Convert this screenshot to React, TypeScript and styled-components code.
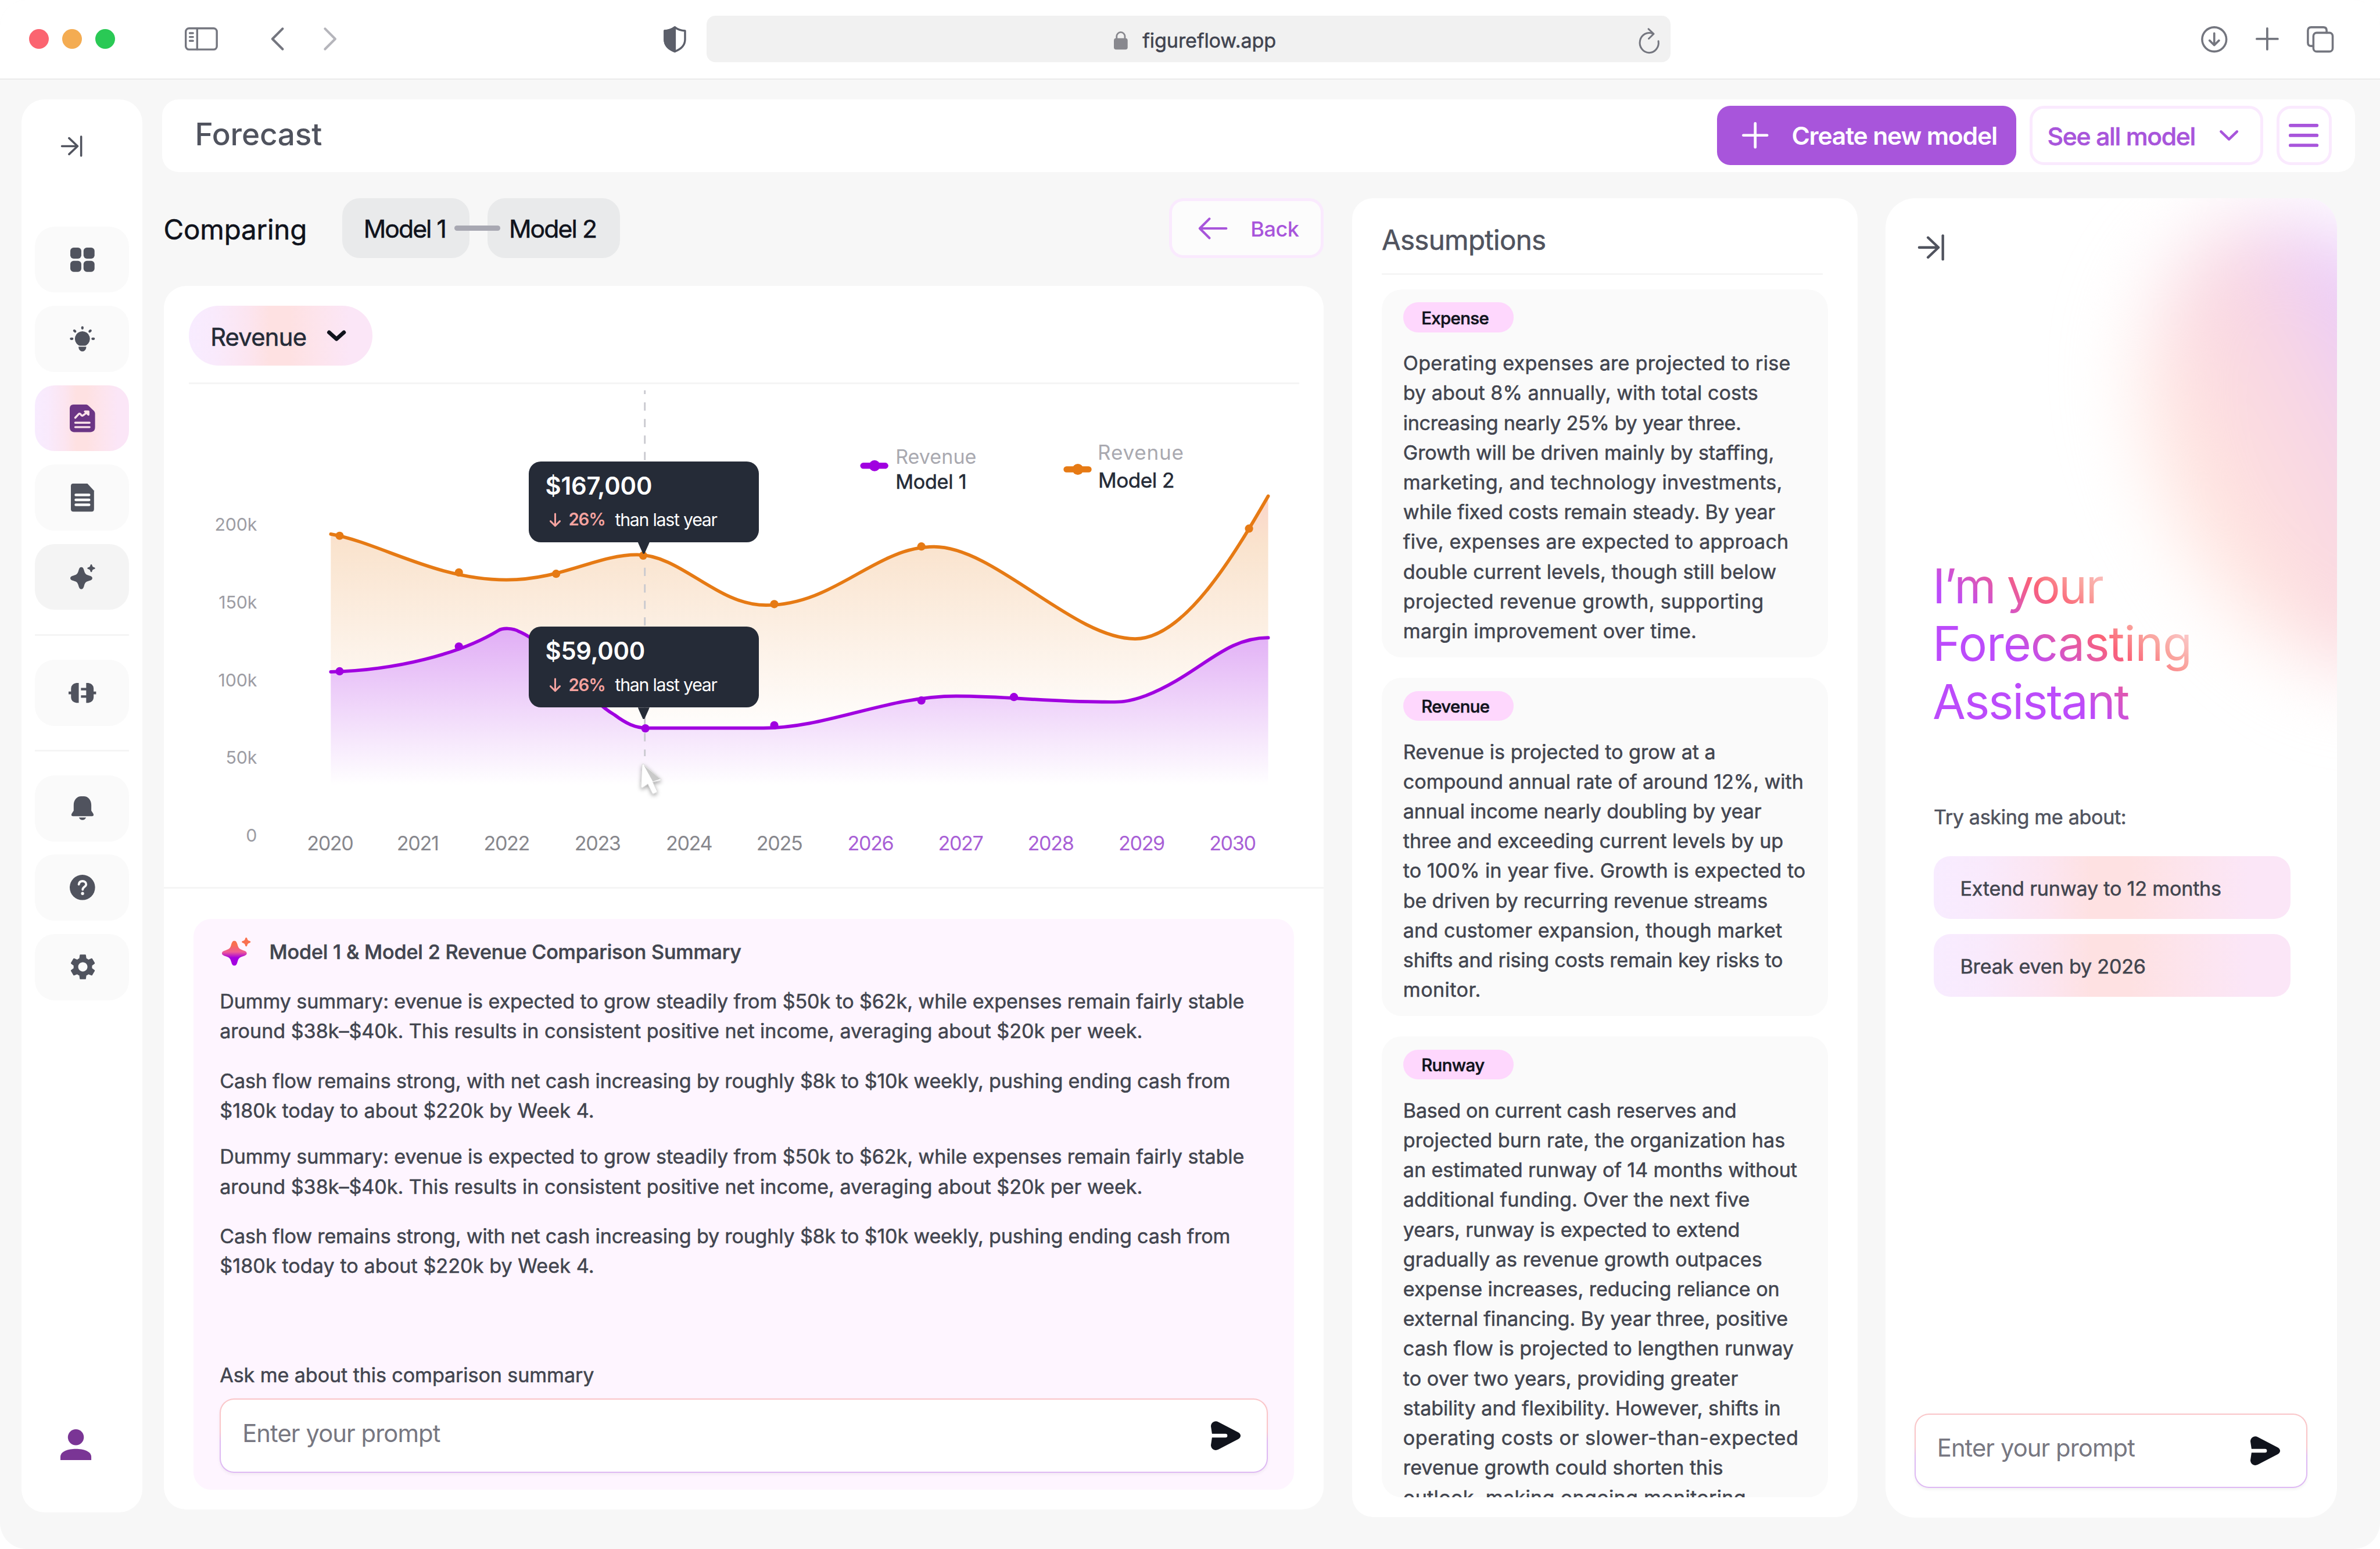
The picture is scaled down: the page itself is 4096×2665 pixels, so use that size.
import React from "react";
import styled, { createGlobalStyle, css } from "styled-components";
import { MdSettings } from "react-icons/md";

const K = 4096 / 4320;
const px = (n: number) => `${+(n * K).toFixed(2)}px`;

const ink = "#10131c";
const slate = "#50535e";
const body = "#42454f";
const violet = "#a855db";
const softGradient =
  "linear-gradient(90deg, #f8ecff 0%, #f9eafc 14%, #fce5f0 32%, #fee1e2 44%, #fee1e2 55%, #fde4ec 70%, #fbe6f7 88%)";

const type = (size: number, weight: number, track = 0) => css`
  font-size: ${px(size)};
  font-weight: ${weight};
  letter-spacing: ${track}em;
  white-space: nowrap;
`;

/* Thickens the regular face to a book weight between 400 and 500. */
const book = css`
  -webkit-text-stroke: 0.55px currentColor;
`;

const GlobalStyle = createGlobalStyle`
  * { box-sizing: border-box; }
  body { margin: 0; background: #fff; }
  body, button, input { font-family: Inter, "Liberation Sans", sans-serif; }
  h1, h2, h3, p { margin: 0; }
  button { border: 0; padding: 0; background: none; text-align: left; }
`;

/* ---------- window chrome ---------- */

const Window = styled.div`
  display: flex;
  flex-direction: column;
  width: 100vw;
  height: 100vh;
  overflow: hidden;
  border-radius: ${px(48)};
  background: #f7f7f7;
`;

const TitleBar = styled.header`
  display: flex;
  align-items: center;
  flex: none;
  height: ${px(144)};
  padding: 0 ${px(84)} 0 ${px(53)};
  background: #fff;
  border-bottom: ${px(3)} solid #ebebeb;
`;

const Lights = styled.div`
  display: flex;
  gap: ${px(24)};
  margin-right: ${px(126)};
`;

const Light = styled.span<{ $color: string }>`
  width: ${px(36)};
  height: ${px(36)};
  border-radius: 50%;
  background: ${(p) => p.$color};
`;

const NavArrows = styled.div`
  display: flex;
  gap: ${px(71)};
  margin: 0 ${px(594)} 0 ${px(97)};
`;

const AddressBar = styled.div`
  display: flex;
  align-items: center;
  width: ${px(1749)};
  height: ${px(84)};
  margin-left: ${px(37)};
  padding: ${px(4)} ${px(20)} 0 ${px(739)};
  border-radius: ${px(16)};
  background: #f1f1f1;
`;

const Address = styled.span`
  ${type(36, 400, -0.003)}
  ${book}
  flex: 1;
  margin-left: ${px(27)};
  color: #414450;
`;

const BarActions = styled.div`
  display: flex;
  align-items: center;
  gap: ${px(51)};
  margin-left: auto;
`;

/* ---------- page frame ---------- */

const Page = styled.div`
  display: flex;
  gap: ${px(36)};
  padding: ${px(36)} 0 0 ${px(39)};
`;

const Sidebar = styled.nav`
  display: flex;
  flex-direction: column;
  align-items: flex-start;
  width: ${px(219)};
  height: ${px(2564)};
  padding: ${px(66)} ${px(24)} ${px(94)};
  border-radius: ${px(42)};
  background: #fff;
`;

const CollapseButton = styled.button`
  display: flex;
  height: ${px(39)};
  margin: 0 0 ${px(126)} ${px(48)};
`;

const NavGroup = styled.div`
  display: flex;
  flex-direction: column;
  gap: ${px(24)};
`;

const NavItem = styled.button<{ $state?: "active" | "hover" }>`
  display: flex;
  align-items: center;
  justify-content: center;
  width: ${px(171)};
  height: ${px(120)};
  padding-left: ${px(3)};
  border-radius: ${px(36)};
  background: ${(p) =>
    p.$state === "active" ? softGradient : p.$state === "hover" ? "#f4f4f4" : "#fafafa"};
  color: ${(p) => (p.$state === "active" ? "#6b3585" : slate)};
`;

const NavRule = styled.hr`
  width: ${px(171)};
  height: ${px(3)};
  margin: ${px(43.5)} 0;
  border: 0;
  background: #f5f5f5;
`;

const Avatar = styled.div`
  display: flex;
  margin: auto 0 0 ${px(47)};
`;

const Main = styled.main`
  display: flex;
  flex-direction: column;
  gap: ${px(48)};
`;

const Header = styled.div`
  display: flex;
  align-items: center;
  width: ${px(3981)};
  height: ${px(132)};
  padding: 0 ${px(43)} 0 ${px(60)};
  border-radius: ${px(30)};
  background: #fff;
`;

const PageTitle = styled.h1`
  ${type(56, 500, -0.004)}
  flex: 1;
  padding-bottom: ${px(4)};
  color: ${slate};
`;

const CreateButton = styled.button`
  ${type(45, 600, -0.028)}
  display: flex;
  align-items: center;
  gap: ${px(42)};
  width: ${px(543)};
  height: ${px(108)};
  padding-left: ${px(45)};
  border-radius: ${px(24)};
  background: ${violet};
  color: #fff;
`;

const OutlineButton = styled.button<{ $width: number; $pad: string; $fill?: string }>`
  display: flex;
  align-items: center;
  justify-content: space-between;
  width: ${(p) => px(p.$width)};
  height: ${px(108)};
  padding: ${(p) => p.$pad};
  border: ${px(6)} solid #faeafe;
  border-radius: ${px(26)};
  background: ${(p) => p.$fill ?? "#fff"};
  color: ${violet};
`;

const SeeAllLabel = styled.span`
  ${type(45, 500, -0.032)}
  ${book}
  padding-top: ${px(3)};
`;

const BackLabel = styled.span`
  ${type(38, 500, -0.013)}
  padding-top: ${px(3)};
`;

const HeaderActions = styled.div`
  display: flex;
  gap: ${px(24)};
`;

const Columns = styled.div`
  display: flex;
  align-items: flex-start;
  gap: ${px(51)};
  padding-left: ${px(3)};
`;

/* ---------- comparison column ---------- */

const Comparison = styled.section`
  display: flex;
  flex-direction: column;
  gap: ${px(51)};
  width: ${px(2106)};
`;

const CompareRow = styled.div`
  display: flex;
  align-items: center;
  height: ${px(108)};
`;

const CompareLabel = styled.h2`
  ${type(50, 400, -0.003)}
  ${book}
  width: ${px(324)};
  padding: ${px(5)} 0 0 0;
  color: ${ink};
`;

const ChipPair = styled.div`
  position: relative;
  display: flex;
  gap: ${px(33)};
  margin-right: auto;
`;

const ModelChip = styled.div<{ $width: number }>`
  ${type(45, 400, -0.045)}
  ${book}
  display: flex;
  align-items: center;
  width: ${(p) => px(p.$width)};
  height: ${px(108)};
  padding: ${px(3)} 0 0 ${px(39)};
  border-radius: ${px(32)};
  background: #e9eaeb;
  color: ${ink};
`;

const ChipLink = styled.span`
  position: absolute;
  left: ${px(204)};
  top: ${px(49)};
  width: ${px(83)};
  height: ${px(10)};
  border-radius: ${px(5)};
  background: #a8a8b2;
`;

const Card = styled.div`
  display: flex;
  flex-direction: column;
  height: ${px(2220)};
  padding-top: ${px(36)};
  border-radius: ${px(40)};
  background: #fff;
`;

const MetricSelect = styled.button`
  ${type(44, 400, -0.018)}
  ${book}
  display: flex;
  align-items: center;
  justify-content: space-between;
  flex: none;
  width: ${px(333)};
  height: ${px(108)};
  margin-left: ${px(46)};
  padding: 0 ${px(48)} 0 ${px(39)};
  border-radius: ${px(54)};
  background: ${softGradient};
  color: #252b37;
`;

const MetricName = styled.span`
  padding-top: ${px(5)};
`;

const Rule = styled.hr<{ $margin: string }>`
  flex: none;
  align-self: stretch;
  height: ${px(3)};
  margin: ${(p) => p.$margin};
  border: 0;
  background: #f5f5f5;
`;

const ChartArea = styled.div`
  position: relative;
  height: ${px(913)};
`;

const ChartSvg = styled.svg`
  display: block;
  width: 100%;
  height: 100%;
`;

const ChartText = styled.text<{ $fill: string; $size: number; $track: number }>`
  font-size: ${(p) => p.$size}px;
  letter-spacing: ${(p) => p.$track}em;
  fill: ${(p) => p.$fill};
`;

const LegendName = styled(ChartText)`
  stroke: #252b37;
  stroke-width: 0.6px;
`;

const Tooltip = styled.div<{ $top: number }>`
  position: absolute;
  left: ${px(663)};
  top: ${(p) => px(p.$top)};
  display: flex;
  flex-direction: column;
  gap: ${px(14)};
  width: ${px(417)};
  height: ${px(147)};
  padding: ${px(18)} ${px(30)} 0;
  border-radius: ${px(22)};
  background: #252b37;
  color: #fff;

  &::after {
    content: "";
    position: absolute;
    left: ${px(198)};
    top: 100%;
    width: ${px(21)};
    height: ${px(21)};
    background: #252b37;
    clip-path: polygon(0 0, 100% 0, 90% 25%, 56% 100%, 44% 100%, 10% 25%);
  }
`;

const TooltipValue = styled.strong<{ $track: number }>`
  font-size: ${px(44)};
  font-weight: 600;
  letter-spacing: ${(p) => p.$track}em;
  line-height: ${px(54)};
`;

const TooltipNote = styled.div`
  display: flex;
  align-items: center;
  height: ${px(40)};
  padding-left: ${px(8)};
`;

const TooltipDelta = styled.span`
  ${type(31, 600, -0.04)}
  margin: 0 ${px(18)} 0 ${px(14)};
  color: #f5a3a0;
`;

const TooltipText = styled.span`
  ${type(32, 400, -0.042)}
`;

/* ---------- summary ---------- */

const Summary = styled.div`
  display: flex;
  flex-direction: column;
  height: ${px(1035)};
  margin: ${px(55)} ${px(54)} 0;
  padding: ${px(32)} ${px(48)} ${px(30)};
  border-radius: ${px(32)};
  background: #fef5ff;
`;

const SummaryHead = styled.div`
  display: flex;
  align-items: center;
  gap: ${px(33)};
  height: ${px(54)};
  padding-left: ${px(4)};
`;

const SummaryTitle = styled.h3`
  ${type(36, 500, -0.005)}
  ${book}
  color: ${body};
`;

const Paragraph = styled.p<{ $gap: number }>`
  display: flex;
  flex-direction: column;
  margin-top: ${(p) => px(p.$gap)};
`;

const Line = styled.span<{ $track: number }>`
  ${book}
  font-size: ${px(36)};
  font-weight: 400;
  line-height: ${px(54)};
  letter-spacing: ${(p) => p.$track / 1000}em;
  white-space: pre;
  color: ${body};
`;

const AskLabel = styled.label`
  ${type(36, 400, -0.003)}
  ${book}
  margin-top: auto;
  line-height: ${px(54)};
  color: ${body};
`;

const PromptBox = styled.div<{ $margin: string }>`
  display: flex;
  align-items: center;
  justify-content: space-between;
  flex: none;
  height: ${px(135)};
  margin: ${(p) => p.$margin};
  padding: 0 ${px(46)} 0 ${px(39)};
  border: ${px(3)} solid transparent;
  border-radius: ${px(26)};
  background:
    linear-gradient(#fff, #fff) padding-box,
    linear-gradient(#fac5c8 44%, #deb9f3 58%) border-box;
  box-shadow: 0 ${px(3)} ${px(6)} rgba(16, 19, 28, 0.05);
`;

const Placeholder = styled.span`
  ${type(44, 400, -0.022)}
  padding-bottom: ${px(10)};
  color: #777781;
`;

/* ---------- assumptions ---------- */

const Assumptions = styled.section`
  display: flex;
  flex-direction: column;
  width: ${px(918)};
  height: ${px(2393)};
  padding: 0 ${px(54)} ${px(36)};
  border-radius: ${px(38)};
  background: #fff;
`;

const AssumptionsTitle = styled.h2`
  ${type(50, 400, -0.014)}
  ${book}
  height: ${px(135.5)};
  padding-top: ${px(14)};
  line-height: ${px(122)};
  color: ${slate};
`;

const AssumptionList = styled.div`
  display: flex;
  flex-direction: column;
  gap: ${px(37)};
  height: ${px(2192)};
  overflow: hidden;
  border-radius: ${px(36)};
`;

const AssumptionCard = styled.article`
  flex: none;
  padding: ${px(24)} ${px(39)} ${px(21)};
  border-radius: ${px(36)};
  background: #fafafa;
`;

const Tag = styled.span`
  ${type(31, 500, -0.02)}
  ${book}
  display: flex;
  align-items: center;
  width: ${px(201)};
  height: ${px(54)};
  padding: ${px(2)} 0 0 ${px(33)};
  border-radius: ${px(27)};
  background: #fed7fd;
  color: ${ink};
`;

/* ---------- assistant ---------- */

const Assistant = styled.aside`
  position: relative;
  display: flex;
  flex-direction: column;
  width: ${px(819)};
  height: ${px(2394)};
  padding: ${px(65)} ${px(54)} ${px(54)} ${px(52)};
  overflow: hidden;
  border-radius: ${px(54)};
  background: #fff;
`;

const Glow = styled.div`
  position: absolute;
  left: ${px(500)};
  top: ${px(14)};
  width: ${px(600)};
  height: ${px(870)};
  border-radius: 50%;
  background: linear-gradient(88deg, #ffe3dd 13%, #fee0e0 25%, #f9d8e2 38%, #f8d6e3 56%, #eacbfa 72%);
  filter: blur(${px(72)});
  transform: rotate(-25deg);
`;

const PanelButton = styled.button`
  position: relative;
  display: flex;
  height: ${px(48)};
  margin-left: ${px(7)};
`;

const AssistantTitle = styled.h2`
  position: relative;
  width: ${px(640)};
  margin: ${px(538)} 0 ${px(130)} ${px(33)};
  font-size: ${px(87)};
  font-weight: 400;
  line-height: ${px(105)};
  background: linear-gradient(39deg, #bc4bfb 32%, #fb6277 50%, #faa19b 58%, #fbc8c8 66%);
  background-clip: text;
  -webkit-background-clip: text;
  color: transparent;
`;

const TitleLine = styled.span<{ $track: number }>`
  display: block;
  letter-spacing: ${(p) => p.$track}em;
`;

const Hint = styled.p`
  ${type(36, 400, -0.01)}
  ${book}
  margin: 0 0 ${px(44)} ${px(35)};
  line-height: ${px(54)};
  color: ${slate};
`;

const Suggestions = styled.div`
  display: flex;
  flex-direction: column;
  gap: ${px(27)};
  margin-left: ${px(35)};
`;

const Suggestion = styled.button`
  ${type(36, 400, -0.006)}
  ${book}
  width: ${px(648)};
  height: ${px(114)};
  padding: ${px(3)} 0 0 ${px(48)};
  border-radius: ${px(30)};
  background: ${softGradient};
  color: ${body};
`;

/* ---------- icons ---------- */

type IconProps = { w: number; h: number; children: React.ReactNode; stroke?: string; width?: number };

const IconSvg = styled.svg`
  display: block;
  flex: none;
  overflow: visible;
`;

function Icon({ w, h, children, stroke, width = 4 }: IconProps) {
  return (
    <IconSvg
      width={w * K}
      height={h * K}
      viewBox={`0 0 ${w} ${h}`}
      fill={stroke ? "none" : "currentColor"}
      stroke={stroke}
      strokeWidth={width}
      strokeLinecap="round"
      strokeLinejoin="round"
    >
      {children}
    </IconSvg>
  );
}

const STAR =
  "M20 0C22.6 0 23.8 1.8 25 6C26.7 12 28 13.4 34 15.2C38.2 16.4 40 17.6 40 20C40 22.4 38.2 23.6 34 24.8C28 26.6 26.7 28 25 34C23.8 38.2 22.6 40 20 40C17.4 40 16.2 38.2 15 34C13.3 28 12 26.6 6 24.8C1.8 23.6 0 22.4 0 20C0 17.6 1.8 16.4 6 15.2C12 13.4 13.3 12 15 6C16.2 1.8 17.4 0 20 0Z";

const CollapseIcon = ({ size }: { size: number }) => (
  <IconSvg
    width={size * K}
    height={size * K}
    viewBox="0 0 48 48"
    fill="none"
    stroke={slate}
    strokeWidth="4.6"
    strokeLinecap="round"
    strokeLinejoin="round"
  >
    <path d="M2 24H37M18 6L37 24L18 42" />
    <path d="M45 2.5V45.5" />
  </IconSvg>
);

const SendIcon = () => (
  <Icon w={55} h={53}>
    <path
      fill={ink}
      d="M0 9.5C0 2.5 7 -2 13.5 1.5L49 20C55.5 23.4 55.5 29.6 49 33L13.5 51.5C7 55 0 50.5 0 43.5L2 29.8H26.5A3.4 3.4 0 0 0 26.5 23H2Z"
    />
  </Icon>
);

const DashboardIcon = () => (
  <Icon w={44} h={44}>
    <rect width="20" height="20" rx="6" />
    <rect x="24" width="20" height="20" rx="6" />
    <rect y="24" width="20" height="20" rx="6" />
    <rect x="24" y="24" width="20" height="20" rx="6" />
  </Icon>
);

const BulbIcon = () => (
  <Icon w={46} h={46}>
    <path d="M23 9.5A13.6 13.6 0 0 1 30.5 34.5Q29 35.5 27.5 35.5H18.5Q17 35.5 15.5 34.5A13.6 13.6 0 0 1 23 9.5Z" />
    <path d="M16 37.5H30C30 42.5 27 46 23 46S16 42.5 16 37.5Z" />
    <g stroke="currentColor" strokeWidth="4.4" fill="none">
      <path d="M23 2.5V4M8.3 8.3L9.8 9.6M37.7 8.3L36.2 9.6M2.5 23H4.5M43.5 23H41.5" />
    </g>
  </Icon>
);

const ForecastIcon = () => (
  <Icon w={46} h={50}>
    <path d="M7 0H29C31 0 32.5 .6 34 2L43.5 11C45.2 12.7 46 14.5 46 17V41C46 47 43 50 37 50H8C3 50 0 47 0 41V8C0 3 2 0 7 0Z" />
    <g stroke="#fde3ea" strokeWidth="3.6" fill="none">
      <path d="M10 24L16 17.5C17.5 16 18.8 16.2 20 18C21.5 20.8 23 20.8 25 19L31 14.5" />
      <path d="M27.5 12.5H34V18.5Z" fill="#fde3ea" />
      <path d="M10 33H36M10 41H36" />
    </g>
  </Icon>
);

const DocumentIcon = () => (
  <Icon w={42} h={51}>
    <path d="M4 0H30L42 13V46.5Q42 51 37.5 51H4.5Q0 51 0 46.5V4.5Q0 0 4 0Z" />
    <path d="M9 20.5H33M9 29.5H33M9 38.5H33" stroke="#fafafa" strokeWidth="4.8" />
  </Icon>
);

const SparkleIcon = () => (
  <Icon w={45} h={45}>
    <path d={STAR} transform="translate(0 5)" />
    <path d={STAR} transform="translate(31 0) scale(.35)" />
  </Icon>
);

const PlugIcon = () => (
  <Icon w={50} h={36}>
    <path d="M14 0H18.5V36H14Q4.5 34 4.5 26V20.5H0V15.5H4.5V10Q4.5 2 14 0Z" />
    <path d="M32 0H36Q45.5 2 45.5 10V15.5H50V20.5H45.5V26Q45.5 34 36 36H32V27H22.5V22.5H32V13.5H22.5V9H32Z" />
  </Icon>
);

const BellIcon = () => (
  <Icon w={40} h={43}>
    <path d="M4 26V16C4 6.5 10 0 17.5 0H22.5C30 0 36 6.5 36 16V26L39.5 31.5Q41.5 36 37.5 36H2.5Q-1.5 36 .5 31.5Z" />
    <path d="M13.5 38.5H26.5Q24.5 43 20 43T13.5 38.5Z" />
  </Icon>
);

const HelpIcon = () => (
  <Icon w={46} h={46}>
    <circle cx="23" cy="23" r="23" />
    <path
      d="M16.5 17.5C17 13.5 19.8 11.6 23.2 11.6C27 11.6 29.8 13.8 29.8 17.3C29.8 22 23.5 22 23.5 27"
      fill="none"
      stroke="#fafafa"
      strokeWidth="4"
    />
    <circle cx="23.3" cy="34" r="2.8" fill="#fafafa" />
  </Icon>
);

const SummarySparkle = () => (
  <Icon w={53} h={51}>
    <defs>
      <linearGradient id="spark" x1="0" y1="0" x2="0" y2="1">
        <stop offset=".15" stopColor="#f9704f" />
        <stop offset=".45" stopColor="#ee5c96" />
        <stop offset=".68" stopColor="#a400e0" />
      </linearGradient>
    </defs>
    <path d={STAR} transform="translate(0 6) scale(1.125)" fill="url(#spark)" />
    <path d={STAR} transform="translate(36 0) scale(.4)" fill="#f9704f" />
  </Icon>
);

/* ---------- data ---------- */

type TextLine = [text: string, track: number];

const yLabels: [string, number][] = [
  ["200k", 963],
  ["150k", 1104],
  ["100k", 1245],
  ["50k", 1386],
  ["0", 1527],
];

const xLabels: [string, number][] = [
  ["2020", 598.5],
  ["2021", 757.5],
  ["2022", 919],
  ["2023", 1084],
  ["2024", 1250],
  ["2025", 1414],
  ["2026", 1579.5],
  ["2027", 1743],
  ["2028", 1906.5],
  ["2029", 2071.5],
  ["2030", 2236.5],
];

const model2Curve =
  "M600 969C690 985 790 1052 919 1052C1019 1052 1083 1006.5 1156 1006.5C1236 1006.5 1300 1098 1390 1098C1516 1098 1588 992 1695 992C1805 992 1948 1159 2060 1159C2150 1159 2241 1005 2301.5 900";
const model1Curve =
  "M600 1219C720 1216 835 1186 904 1144C912 1139 930 1139 942 1146C1000 1170 1060 1265 1115 1297C1135 1312 1152 1321 1175 1321L1385 1321C1500 1321 1610 1263 1735 1263C1830 1263 1890 1273 2000 1273.5C2030 1274 2045 1275 2080 1262C2180 1222 2220 1157 2301.5 1157";

const model2Points = [[616, 972], [832.5, 1038.6], [1009, 1041], [1167, 1008], [1405, 1096], [1672, 991.5], [2266.7, 959]];
const model1Points = [[616, 1218], [832.5, 1173], [1171, 1321.5], [1405, 1316], [1672, 1271], [1840, 1264.6]];

const dummy: TextLine[] = [
  ["Dummy summary: evenue is expected to grow steadily from $50k to $62k, while expenses remain fairly stable", -3.7],
  ["around $38k–$40k. This results in consistent positive net income, averaging about $20k per week.", -1],
];
const cash: TextLine[] = [
  ["Cash flow remains strong, with net cash increasing by roughly $8k to $10k weekly, pushing ending cash from", -6],
  ["$180k today to about $220k by Week 4.", 2],
];

const assumptions: { tag: string; lines: TextLine[] }[] = [
  {
    tag: "Expense",
    lines: [
      ["Operating expenses are projected to rise", 7],
      ["by about 8% annually, with total costs", 0],
      ["increasing nearly 25% by year three.", -10],
      ["Growth will be driven mainly by staffing,", -5],
      ["marketing, and technology investments,", 7],
      ["while fixed costs remain steady. By year", -5],
      ["five, expenses are expected to approach", 5],
      ["double current levels, though still below", 1],
      ["projected revenue growth, supporting", 10],
      ["margin improvement over time.", 5],
    ],
  },
  {
    tag: "Revenue",
    lines: [
      ["Revenue is projected to grow at a", 0],
      ["compound annual rate of around 12%, with", -2],
      ["annual income nearly doubling by year", -6],
      ["three and exceeding current levels by up", -2],
      ["to 100% in year five. Growth is expected to", 1],
      ["be driven by recurring revenue streams", -7],
      ["and customer expansion, though market", 2],
      ["shifts and rising costs remain key risks to", -7],
      ["monitor.", 12],
    ],
  },
  {
    tag: "Runway",
    lines: [
      ["Based on current cash reserves and", -8],
      ["projected burn rate, the organization has", 1],
      ["an estimated runway of 14 months without", -3],
      ["additional funding. Over the next five", 1],
      ["years, runway is expected to extend", -3],
      ["gradually as revenue growth outpaces", 1],
      ["expense increases, reducing reliance on", -2],
      ["external financing. By year three, positive", -4],
      ["cash flow is projected to lengthen runway", -1],
      ["to over two years, providing greater", 1],
      ["stability and flexibility. However, shifts in", -1],
      ["operating costs or slower-than-expected", 16],
      ["revenue growth could shorten this", 0],
      ["outlook, making ongoing monitoring", 9],
    ],
  },
];

/* ---------- parts ---------- */

const Lines = ({ lines, gap }: { lines: TextLine[]; gap: number }) => (
  <Paragraph $gap={gap}>
    {lines.map(([text, track]) => (
      <Line key={text} $track={track}>
        {text}
      </Line>
    ))}
  </Paragraph>
);

function Chart() {
  return (
    <ChartSvg viewBox="297 697 2106 913">
      <defs>
        <linearGradient id="fill2" gradientUnits="userSpaceOnUse" x1="0" y1="900" x2="0" y2="1340">
          <stop offset="0" stopColor="#f0603a" stopOpacity=".27" />
          <stop offset=".2" stopColor="#e67a14" stopOpacity=".21" />
          <stop offset="1" stopColor="#e67a14" stopOpacity="0" />
        </linearGradient>
        <linearGradient id="fill1" gradientUnits="userSpaceOnUse" x1="0" y1="1140" x2="0" y2="1425">
          <stop offset="0" stopColor="#a000e0" stopOpacity=".32" />
          <stop offset="1" stopColor="#a000e0" stopOpacity="0" />
        </linearGradient>
        <filter id="cursorShadow" x="-50%" y="-50%" width="200%" height="200%">
          <feDropShadow dx="0" dy="3" stdDeviation="4" floodOpacity=".35" />
        </filter>
      </defs>

      <path d={`${model2Curve}V1425H600Z`} fill="url(#fill2)" />
      <path d={`${model1Curve}V1425H600Z`} fill="#fff" />
      <path d={`${model1Curve}V1425H600Z`} fill="url(#fill1)" />
      <path d="M1170 708V1372" stroke="#c9c9cf" strokeWidth="3" strokeDasharray="15 15" strokeDashoffset="8" />
      <g fill="none" strokeWidth="6" strokeLinecap="round">
        <path d={model2Curve} stroke="#e67a14" />
        <path d={model1Curve} stroke="#a000e0" />
      </g>
      <g fill="#e67a14">
        {model2Points.map(([x, y]) => (
          <circle key={x} cx={x} cy={y} r="7.5" />
        ))}
      </g>
      <g fill="#a000e0">
        {model1Points.map(([x, y]) => (
          <circle key={x} cx={x} cy={y} r="7.5" />
        ))}
      </g>

      {yLabels.map(([label, y]) => (
        <ChartText key={label} x={466} y={y} textAnchor="end" $fill="#9c9ca3" $size={32} $track={-0.005}>
          {label}
        </ChartText>
      ))}
      {xLabels.map(([label, x], i) => (
        <ChartText
          key={label}
          x={x}
          y={1543}
          textAnchor="middle"
          $fill={i < 6 ? "#87878d" : "#a85fd6"}
          $size={36}
          $track={-0.04}
        >
          {label}
        </ChartText>
      ))}

      <g fill="#a000e0">
        <rect x="1561" y="839.5" width="51" height="11" rx="5.5" />
        <circle cx="1587" cy="845" r="10" />
      </g>
      <ChartText x={1625} y={842} $fill="#a9a9b0" $size={36} $track={0}>
        Revenue
      </ChartText>
      <LegendName x={1625} y={887} $fill="#252b37" $size={36} $track={-0.007}>
        Model 1
      </LegendName>
      <g fill="#e67a14">
        <rect x="1930" y="846" width="51" height="11" rx="5.5" />
        <circle cx="1956" cy="851.5" r="10" />
      </g>
      <ChartText x={1992} y={834} $fill="#a9a9b0" $size={37} $track={0.022}>
        Revenue
      </ChartText>
      <LegendName x={1993} y={885} $fill="#252b37" $size={37} $track={-0.014}>
        Model 2
      </LegendName>

      <g filter="url(#cursorShadow)">
        <path
          d="M1165 1388C1165 1386 1167 1385.5 1168.5 1387L1198 1412.5C1200 1414.5 1199.5 1416 1197 1416.5L1184.5 1419L1192 1434.5C1192.8 1436.2 1192.5 1437 1191 1438L1186.5 1440C1185 1440.5 1184 1440.2 1183 1438.5L1175.5 1422.5L1167 1428.5C1164.5 1430 1163 1429.2 1163 1426.5Z"
          fill="#fff"
          stroke="#cfcfcf"
          strokeWidth="1"
        />
        <path d="M1168 1388L1198 1413.5L1184.5 1418Z" fill="#c9c9c9" />
      </g>
    </ChartSvg>
  );
}

const ChartTooltip = ({ top, value, track }: { top: number; value: string; track: number }) => (
  <Tooltip $top={top}>
    <TooltipValue $track={track}>{value}</TooltipValue>
    <TooltipNote>
      <Icon w={20} h={26} stroke="#f5a3a0" width={3.2}>
        <path d="M10 2V24M1.5 15.5L10 24L18.5 15.5" />
      </Icon>
      <TooltipDelta>26%</TooltipDelta>
      <TooltipText>than last year</TooltipText>
    </TooltipNote>
  </Tooltip>
);

const Prompt = ({ margin }: { margin: string }) => (
  <PromptBox $margin={margin}>
    <Placeholder>Enter your prompt</Placeholder>
    <SendIcon />
  </PromptBox>
);

const chrome = "#74767f";

export default function App() {
  return (
    <>
      <GlobalStyle />
      <Window>
        <TitleBar>
          <Lights>
            <Light $color="#fb6470" />
            <Light $color="#f4ac52" />
            <Light $color="#2ac955" />
          </Lights>
          <Icon w={60} h={42} stroke={chrome} width={3.6}>
            <rect x="1.8" y="1.8" width="56.4" height="38.4" rx="6" />
            <path d="M22.5 2V40M9 10.5H15M9 17.5H15M9 24.5H15" />
          </Icon>
          <NavArrows>
            <Icon w={24} h={42} stroke={chrome} width={4.4}>
              <path d="M21.5 2.5L3 21L21.5 39.5" />
            </Icon>
            <Icon w={24} h={42} stroke="#b5b5bb" width={4.4}>
              <path d="M2.5 2.5L21 21L2.5 39.5" />
            </Icon>
          </NavArrows>
          <Icon w={41} h={48} stroke="#5c5f6a" width={3.6}>
            <path d="M20.5 2C15.5 6 9 8 2 8.5V24C2 35 10 42 20.5 46C31 42 39 35 39 24V8.5C32 8 25.5 6 20.5 2Z" />
            <path d="M20.5 2C15.5 6 9 8 2 8.5V24C2 35 10 42 20.5 46Z" fill="#5c5f6a" />
          </Icon>
          <AddressBar>
            <Icon w={25} h={33}>
              <rect y="12.5" width="25" height="20.5" rx="4" fill="#88888e" />
              <path d="M5 14V9.5A7.5 8 0 0 1 20 9.5V14" fill="none" stroke="#88888e" strokeWidth="3" />
            </Icon>
            <Address>figureflow.app</Address>
            <Icon w={38} h={45} stroke={chrome} width={3.2}>
              <path d="M36 24A17 18 0 1 1 26 10.5M18 2L27.5 10.8L18.5 19.5" />
            </Icon>
          </AddressBar>
          <BarActions>
            <Icon w={48} h={48} stroke={chrome} width={3.8}>
              <circle cx="24" cy="24" r="22" />
              <path d="M24 13V34M15.5 26L24 34.5L32.5 26" />
            </Icon>
            <Icon w={42} h={42} stroke={chrome} width={4}>
              <path d="M21 2V40M2 21H40" />
            </Icon>
            <Icon w={49} h={48} stroke={chrome} width={3.8}>
              <path d="M12 36H8Q2 36 2 30V8Q2 2 8 2H30Q36 2 36 8V12" />
              <rect x="12" y="12" width="35" height="34" rx="6" />
            </Icon>
          </BarActions>
        </TitleBar>

        <Page>
          <Sidebar>
            <CollapseButton>
              <CollapseIcon size={39} />
            </CollapseButton>
            <NavGroup>
              <NavItem>
                <DashboardIcon />
              </NavItem>
              <NavItem>
                <BulbIcon />
              </NavItem>
              <NavItem $state="active">
                <ForecastIcon />
              </NavItem>
              <NavItem>
                <DocumentIcon />
              </NavItem>
              <NavItem $state="hover">
                <SparkleIcon />
              </NavItem>
            </NavGroup>
            <NavRule />
            <NavItem>
              <PlugIcon />
            </NavItem>
            <NavRule />
            <NavGroup>
              <NavItem>
                <BellIcon />
              </NavItem>
              <NavItem>
                <HelpIcon />
              </NavItem>
              <NavItem>
                <MdSettings size={56 * K} />
              </NavItem>
            </NavGroup>
            <Avatar>
              <Icon w={56} h={56}>
                <g fill="#7a3595">
                  <circle cx="28" cy="14.5" r="14.5" />
                  <path d="M0 56V50C0 40 14 35.5 28 35.5S56 40 56 50V56Z" />
                </g>
              </Icon>
            </Avatar>
          </Sidebar>

          <Main>
            <Header>
              <PageTitle>Forecast</PageTitle>
              <HeaderActions>
                <CreateButton>
                  <Icon w={48} h={48} stroke="#fff" width={5}>
                    <path d="M24 2.5V45.5M2.5 24H45.5" />
                  </Icon>
                  Create new model
                </CreateButton>
                <OutlineButton $width={424} $pad={`0 ${px(40)} 0 ${px(27)}`}>
                  <SeeAllLabel>See all model</SeeAllLabel>
                  <Icon w={34} h={19} stroke={violet} width={4.8}>
                    <path d="M2.5 2.5L17 16.5L31.5 2.5" />
                  </Icon>
                </OutlineButton>
                <OutlineButton $width={100} $pad={`0 ${px(17)}`}>
                  <Icon w={54} h={42} stroke={violet} width={6}>
                    <path d="M3 3H51M3 21H51M3 39H51" />
                  </Icon>
                </OutlineButton>
              </HeaderActions>
            </Header>

            <Columns>
              <Comparison>
                <CompareRow>
                  <CompareLabel>Comparing</CompareLabel>
                  <ChipPair>
                    <ModelChip $width={231}>Model 1</ModelChip>
                    <ModelChip $width={240}>Model 2</ModelChip>
                    <ChipLink />
                  </ChipPair>
                  <OutlineButton $width={281} $pad={`0 ${px(40)} 0 ${px(48)}`} $fill="#fcfcfc">
                    <Icon w={54} h={40} stroke={violet} width={4.4}>
                      <path d="M3 20H51M20.5 2.5L3 20L20.5 37.5" />
                    </Icon>
                    <BackLabel>Back</BackLabel>
                  </OutlineButton>
                </CompareRow>

                <Card>
                  <MetricSelect>
                    <MetricName>Revenue</MetricName>
                    <Icon w={34} h={18} stroke={ink} width={7}>
                      <path d="M3.5 3L17 15L30.5 3" />
                    </Icon>
                  </MetricSelect>
                  <Rule $margin={`${px(31)} ${px(45)} 0 ${px(46)}`} />
                  <ChartArea>
                    <Chart />
                    <ChartTooltip top={140} value="$167,000" track={-0.004} />
                    <ChartTooltip top={440} value="$59,000" track={-0.008} />
                  </ChartArea>
                  <Rule $margin="0" />
                  <Summary>
                    <SummaryHead>
                      <SummarySparkle />
                      <SummaryTitle>Model 1 &amp; Model 2 Revenue Comparison Summary</SummaryTitle>
                    </SummaryHead>
                    <Lines lines={dummy} gap={36} />
                    <Lines lines={cash} gap={36} />
                    <Lines lines={dummy} gap={30} />
                    <Lines lines={cash} gap={36} />
                    <AskLabel>Ask me about this comparison summary</AskLabel>
                    <Prompt margin={`${px(16)} 0 0`} />
                  </Summary>
                </Card>
              </Comparison>

              <Assumptions>
                <AssumptionsTitle>Assumptions</AssumptionsTitle>
                <Rule $margin={`0 ${px(9)} ${px(26.5)} 0`} />
                <AssumptionList>
                  {assumptions.map(({ tag, lines }) => (
                    <AssumptionCard key={tag}>
                      <Tag>{tag}</Tag>
                      <Lines lines={lines} gap={29} />
                    </AssumptionCard>
                  ))}
                </AssumptionList>
              </Assumptions>

              <Assistant>
                <Glow />
                <PanelButton>
                  <CollapseIcon size={48} />
                </PanelButton>
                <AssistantTitle>
                  <TitleLine $track={-0.029}>I’m your</TitleLine>
                  <TitleLine $track={-0.012}>Forecasting</TitleLine>
                  <TitleLine $track={-0.027}>Assistant</TitleLine>
                </AssistantTitle>
                <Hint>Try asking me about:</Hint>
                <Suggestions>
                  <Suggestion>Extend runway to 12 months</Suggestion>
                  <Suggestion>Break even by 2026</Suggestion>
                </Suggestions>
                <Prompt margin="auto 0 0" />
              </Assistant>
            </Columns>
          </Main>
        </Page>
      </Window>
    </>
  );
}
